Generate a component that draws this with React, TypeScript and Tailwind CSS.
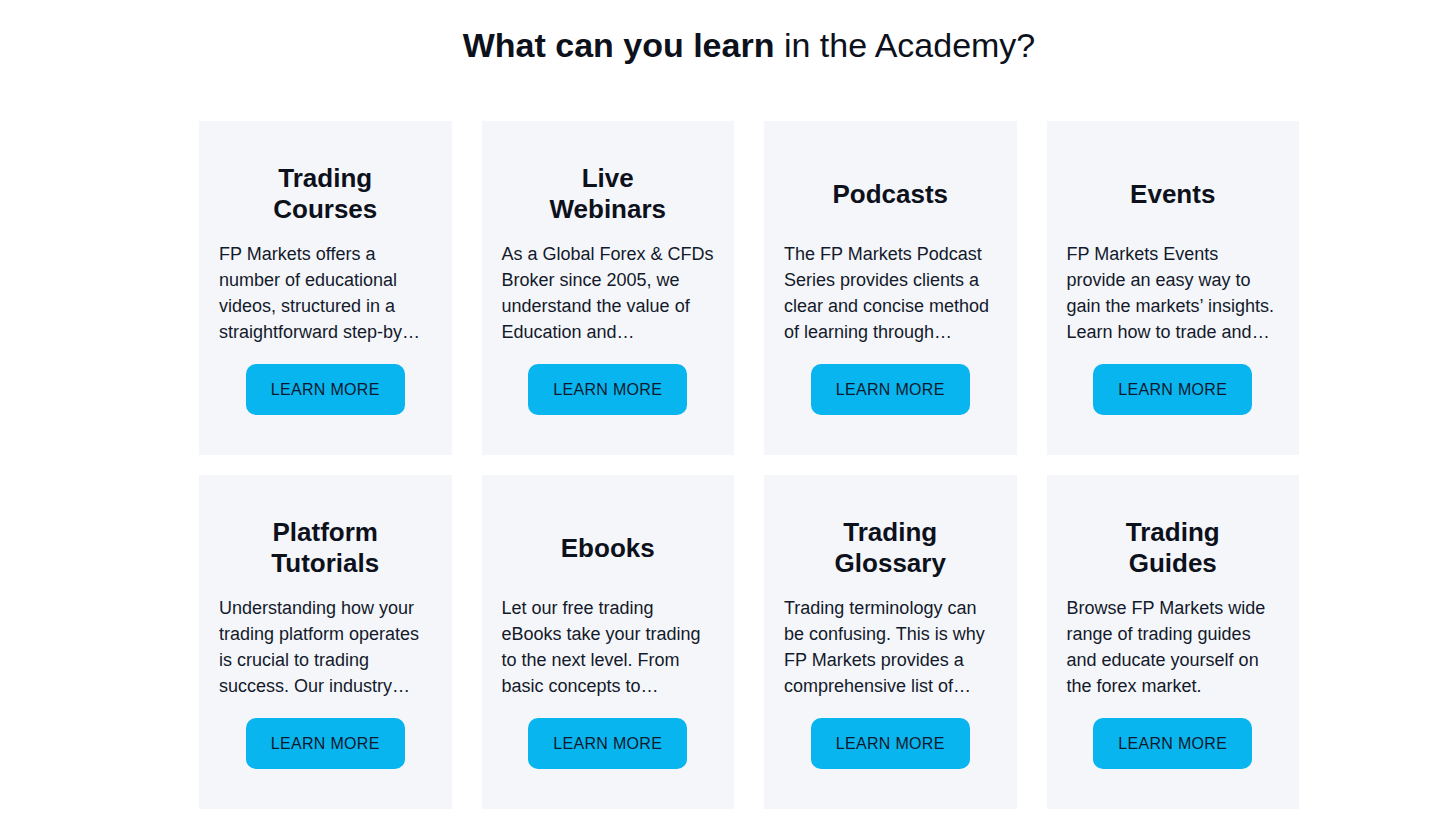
import React from "react";

type Card = { title: string[]; lines: string[] };

const cards: Card[] = [
  {
    title: ["Trading", "Courses"],
    lines: ["FP Markets offers a", "number of educational", "videos, structured in a", "straightforward step-by…"],
  },
  {
    title: ["Live", "Webinars"],
    lines: ["As a Global Forex & CFDs", "Broker since 2005, we", "understand the value of", "Education and…"],
  },
  {
    title: ["Podcasts"],
    lines: ["The FP Markets Podcast", "Series provides clients a", "clear and concise method", "of learning through…"],
  },
  {
    title: ["Events"],
    lines: ["FP Markets Events", "provide an easy way to", "gain the markets’ insights.", "Learn how to trade and…"],
  },
  {
    title: ["Platform", "Tutorials"],
    lines: ["Understanding how your", "trading platform operates", "is crucial to trading", "success. Our industry…"],
  },
  {
    title: ["Ebooks"],
    lines: ["Let our free trading", "eBooks take your trading", "to the next level. From", "basic concepts to…"],
  },
  {
    title: ["Trading", "Glossary"],
    lines: ["Trading terminology can", "be confusing. This is why", "FP Markets provides a", "comprehensive list of…"],
  },
  {
    title: ["Trading", "Guides"],
    lines: ["Browse FP Markets wide", "range of trading guides", "and educate yourself on", "the forex market."],
  },
];

export default function App() {
  return (
    <div
      className="min-h-[820px] w-full bg-white"
      style={{ fontFamily: '"Liberation Sans", Arial, sans-serif' }}
    >
      <div className="ml-[199px] w-[1100px] pt-[25px]">
        <h1 className="text-center text-[34px] leading-[40px] text-[#0c111c]">
          <span className="font-bold">What can you learn</span>{" "}
          <span className="font-normal">in the Academy?</span>
        </h1>
        <div className="mt-[56px] grid grid-cols-4 gap-x-[30px] gap-y-[20px]">
          {cards.map((c, i) => (
            <div
              key={i}
              className="flex h-[334px] flex-col bg-[#f5f6fa] px-[20px] pt-[42px] pb-[40px]"
            >
              <div className="flex h-[62px] flex-col items-center justify-center text-center text-[26px] font-bold leading-[31px] text-[#0c111c]">
                {c.title.map((t, j) => (
                  <div key={j}>{t}</div>
                ))}
              </div>
              <div className="mt-[16px] h-[104px] text-[18px] leading-[26px] text-[#131a2b]">
                {c.lines.map((l, j) => (
                  <div key={j} className="whitespace-nowrap">
                    {l}
                  </div>
                ))}
              </div>
              <div className="mt-[19px] flex justify-center">
                <button className="flex h-[51px] w-[159px] items-center justify-center rounded-[10px] bg-[#09b5ef] text-[16px] tracking-[0.3px] text-[#0d1a2e]">
                  LEARN MORE
                </button>
              </div>
            </div>
          ))}
        </div>
      </div>
    </div>
  );
}
